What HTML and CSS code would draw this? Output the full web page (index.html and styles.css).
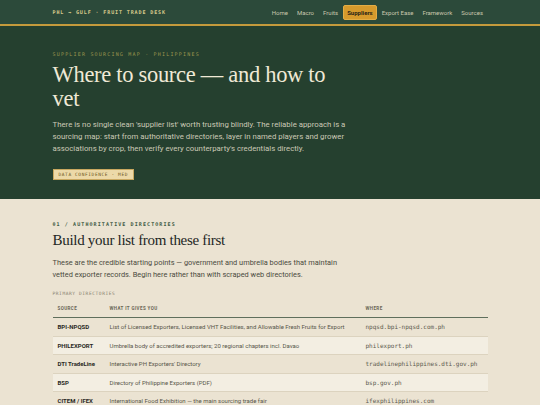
FILE: index.html
```html
<!DOCTYPE html>
<html lang="en">
  <head>
    <meta charset="UTF-8" />
    <meta name="viewport" content="width=device-width, initial-scale=1.0" />
    <title>PHL → Gulf · Suppliers</title>
    <link rel="stylesheet" href="styles.css">
  </head>
  <body>
    <header class="topbar">
      <div class="wrap topbar-inner">
        <div class="brand">PHL → GULF · FRUIT TRADE DESK</div>
        <nav class="nav">
          <a href="#">Home</a>
          <a href="#">Macro</a>
          <a href="#">Fruits</a>
          <a href="#" class="active">Suppliers</a>
          <a href="#">Export Ease</a>
          <a href="#">Framework</a>
          <a href="#">Sources</a>
        </nav>
      </div>
    </header>

    <section class="hero">
      <div class="wrap">
        <div class="eyebrow">SUPPLIER SOURCING MAP · PHILIPPINES</div>
        <h1>Where to source — and how to vet</h1>
        <p class="lede">There is no single clean 'supplier list' worth trusting blindly. The reliable approach is a sourcing map: start from authoritative directories, layer in named players and grower associations by crop, then verify every counterparty's credentials directly.</p>
        <div class="badge">DATA CONFIDENCE · MED</div>
      </div>
    </section>

    <section class="section">
      <div class="wrap">
        <div class="kicker">01 / AUTHORITATIVE DIRECTORIES</div>
        <h2>Build your list from these first</h2>
        <p class="intro">These are the credible starting points — government and umbrella bodies that maintain vetted exporter records. Begin here rather than with scraped web directories.</p>
        <div class="table-label">PRIMARY DIRECTORIES</div>
        <table class="dir">
          <thead>
            <tr><th>Source</th><th>What it gives you</th><th>Where</th></tr>
          </thead>
          <tbody>
            <tr><td class="name">BPI-NPQSD</td><td>List of Licensed Exporters, Licensed VHT Facilities, and Allowable Fresh Fruits for Export</td><td class="url">npqsd.bpi-npqsd.com.ph</td></tr>
            <tr><td class="name">PHILEXPORT</td><td>Umbrella body of accredited exporters; 20 regional chapters incl. Davao</td><td class="url">philexport.ph</td></tr>
            <tr><td class="name">DTI TradeLine</td><td>Interactive PH Exporters' Directory</td><td class="url">tradelinephilippines.dti.gov.ph</td></tr>
            <tr><td class="name">BSP</td><td>Directory of Philippine Exporters (PDF)</td><td class="url">bsp.gov.ph</td></tr>
            <tr><td class="name">CITEM / IFEX</td><td>International Food Exhibition — the main sourcing trade fair</td><td class="url">ifexphilippines.com</td></tr>
          </tbody>
        </table>
      </div>
    </section>
  </body>
</html>
```

FILE: styles.css
```css
* {
  box-sizing: border-box;
}

body {
  margin: 0;
  background: #ebe3d2;
  font-family: "Roboto", "Liberation Sans", sans-serif;
  color: #2a2a24;
}

.wrap {
  max-width: 435px;
  margin: 0 auto;
}

/* top bar */
.topbar {
  background: #2c4a3a;
  border-bottom: 2px solid #c49a3c;
}

.topbar-inner {
  display: flex;
  align-items: center;
  justify-content: space-between;
  height: 24px;
}

.brand {
  font-family: "DejaVu Sans Mono", monospace;
  font-size: 5px;
  font-weight: bold;
  letter-spacing: 0.9px;
  color: #d8cb8c;
}

.nav {
  display: flex;
  gap: 0;
}

.nav a {
  font-size: 6px;
  line-height: 7px;
  color: #c9c7ae;
  text-decoration: none;
  padding: 3px 3.5px;
  border: 1px solid transparent;
  border-radius: 2px;
}

.nav a.active {
  background: #d69a2c;
  color: #2a2416;
  font-weight: bold;
  border-color: #e3ad45;
}

/* hero */
.hero {
  background: #25402f;
  padding: 25px 0 19px;
  color: #ece6d4;
}

.eyebrow {
  font-family: "DejaVu Sans Mono", monospace;
  font-size: 5px;
  letter-spacing: 1.2px;
  color: #9a954e;
}

.hero h1 {
  font-family: "Liberation Serif", serif;
  font-weight: normal;
  font-size: 22.5px;
  letter-spacing: -0.3px;
  line-height: 24px;
  margin: 6px 0 8px;
  max-width: 290px;
  color: #efe9d6;
}

.lede {
  font-size: 7.8px;
  line-height: 12px;
  color: #cbc9b6;
  max-width: 296px;
  margin: 0 0 14px;
}

.badge {
  width: fit-content;
  font-family: "DejaVu Sans Mono", monospace;
  font-size: 4.5px;
  line-height: 5px;
  letter-spacing: 0.6px;
  color: #6a5420;
  background: #ecd9a8;
  border: 1px solid #c9a860;
  padding: 2px 5px;
}

/* directories section */
.section {
  padding: 22px 0 20px;
}

.kicker {
  font-family: "DejaVu Sans Mono", monospace;
  font-size: 5px;
  font-weight: bold;
  letter-spacing: 1.1px;
  color: #3e5a44;
}

.section h2 {
  font-family: "Liberation Serif", serif;
  font-weight: normal;
  font-size: 15px;
  letter-spacing: -0.3px;
  line-height: 17px;
  margin: 5px 0 8px;
  color: #22261f;
}

.intro {
  font-size: 7.4px;
  line-height: 12px;
  color: #4a4a40;
  max-width: 296px;
  margin: 0 0 10px;
}

.table-label {
  font-family: "DejaVu Sans Mono", monospace;
  font-size: 4.5px;
  letter-spacing: 0.6px;
  color: #87826f;
  margin-bottom: 4px;
}

.dir {
  width: 100%;
  border-collapse: collapse;
  font-size: 6px;
}

.dir th {
  text-align: left;
  font-size: 4.5px;
  font-weight: bold;
  letter-spacing: 0.4px;
  text-transform: uppercase;
  color: #6a6656;
  padding: 6px 5px 6px;
  border-bottom: 1px solid #5f6f5c;
}

.dir td {
  padding: 5px 5px;
  height: 18.5px;
  color: #58564a;
  border-bottom: 1px solid #dcd3bf;
}

.dir tbody tr:nth-child(even) td {
  background: #f3eee2;
}

.dir td.name {
  font-weight: bold;
  color: #2a2a24;
  width: 52px;
  white-space: nowrap;
}

.dir td.url {
  font-family: "DejaVu Sans Mono", monospace;
  font-size: 6px;
  color: #5c5a4e;
  width: 127px;
}
```
